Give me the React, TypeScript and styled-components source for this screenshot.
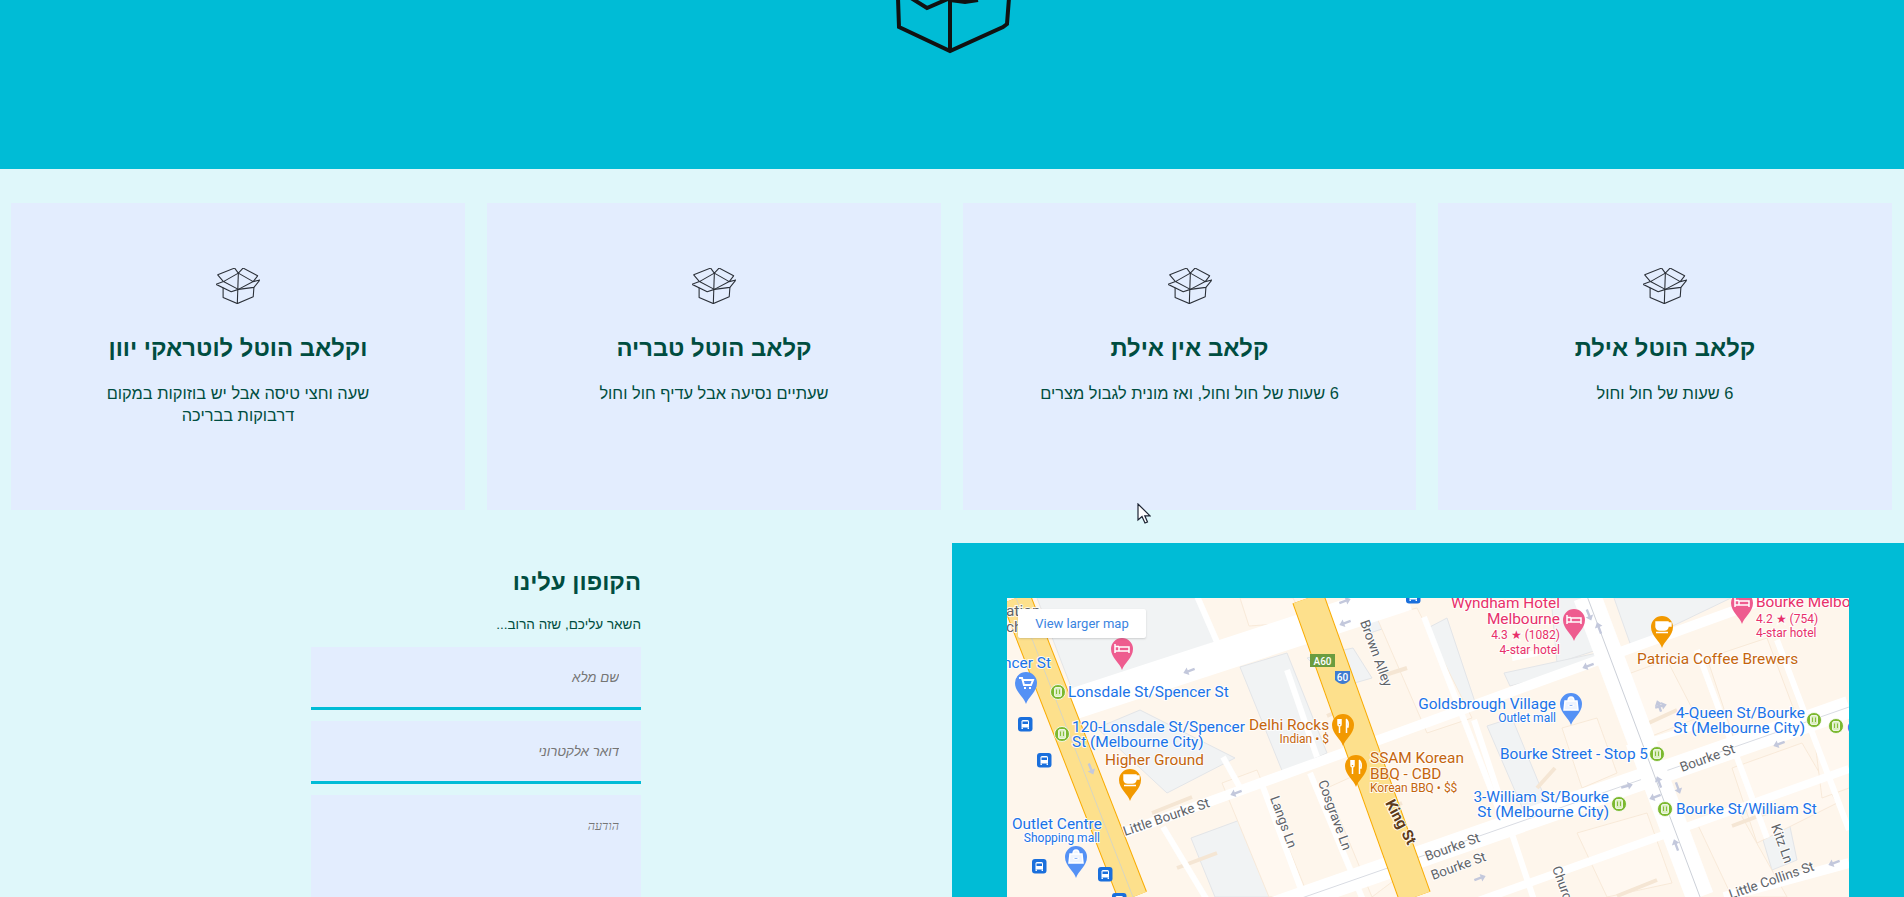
import React from "react"
import styled, { createGlobalStyle } from "styled-components"

const GlobalStyle = createGlobalStyle`
  html, body {
    margin: 0;
    padding: 0;
    background: #dff7fa;
    font-family: "Liberation Sans", Arial, sans-serif;
  }
  * { box-sizing: border-box; }
`

const Page = styled.div`
  position: relative;
  height: 100vh;
  overflow: hidden;
  direction: rtl;
  color: #004d40;
`

const Hero = styled.header`
  height: 169px;
  background: #00bcd6;
  display: flex;
  justify-content: center;
  align-items: flex-start;
`

const Cards = styled.section`
  display: grid;
  grid-template-columns: 454px 453px 454px 454px;
  gap: 22px;
  padding: 34px 12px 0 11px;
`

const Card = styled.article`
  height: 307px;
  background: #e3edfe;
  padding: 65px 70px 0;
  text-align: center;
`

const CardTitle = styled.h3`
  margin: 24px 0 0;
  font-size: 23.8px;
  line-height: 32px;
  font-weight: 700;
`

const CardText = styled.p`
  margin: 19px 0 0;
  font-size: 16.4px;
  line-height: 21.5px;
`

const Contact = styled.section`
  display: grid;
  grid-template-columns: 1fr 1fr;
  margin-top: 33px;
`

const MapPanel = styled.div`
  background: #00bcd6;
  padding: 55px;
`

const MapFrame = styled.div`
  position: relative;
  height: 450px;
  overflow: hidden;
  background: #fef6ec;
`

const MapButton = styled.a`
  position: absolute;
  top: 11px;
  left: 11px;
  width: 128px;
  height: 29px;
  display: flex;
  align-items: center;
  justify-content: center;
  background: #fff;
  border-radius: 2px;
  box-shadow: 0 1px 2px rgba(60, 64, 67, 0.2);
  font: 13px Roboto, Arial, sans-serif;
  color: #3a84df;
  direction: ltr;
`

const FormColumn = styled.form`
  width: 330px;
  margin: 0 auto;
  padding-top: 23px;
`

const FormTitle = styled.h2`
  margin: 0;
  font-size: 23.8px;
  line-height: 32px;
  font-weight: 700;
`

const FormHint = styled.p`
  margin: 18px 0 13px;
  font-size: 13.5px;
  line-height: 18px;
`

const FormInput = styled.input`
  display: block;
  width: 100%;
  height: 63px;
  margin-bottom: 11px;
  padding: 0 22px;
  background: #e3edfe;
  border: 0;
  border-bottom: 3px solid #00bcd6;
  font: italic 13.33px "Liberation Sans", Arial, sans-serif;
`

const FormArea = styled.textarea`
  display: block;
  width: 100%;
  height: 180px;
  padding: 24px 22px;
  background: #e3edfe;
  border: 0;
  resize: none;
  font: italic 12.5px "Liberation Serif", serif;
`

const Cursor = styled.svg`
  position: absolute;
  top: 503px;
  left: 1137px;
`

const MapSvg = styled.svg`
  display: block;
  direction: ltr;
`

const colors: Record<string, string> = {
  blue: "#1a73e8",
  orange: "#c5650d",
  pink: "#e8306a",
  gray: "#5f6368",
  brown: "#5d3a1a",
}

const MapText = styled.text<{ $tone: string; $size: number; $bold?: boolean }>`
  font-family: Roboto, Arial, sans-serif;
  font-size: ${(p) => p.$size}px;
  font-weight: ${(p) => (p.$bold ? 700 : 400)};
  fill: ${(p) => colors[p.$tone]};
  stroke: #fff;
  stroke-width: 2px;
  stroke-opacity: 0.85;
  paint-order: stroke;
`

const BigBox = () => (
  <svg width="120" height="54" viewBox="0 0 120 54" fill="none" stroke="#111" strokeWidth="4">
    <path d="M6 -2 L7 27 L58 51 L111 27 L115 24 L117 -2" />
    <path d="M58 51 L58 -2" />
    <path d="M19 -2 L35 8 L58 -2" />
    <path d="M58 0 L73 2 L86 0" />
  </svg>
)

const SmallBox = () => (
  <svg width="44" height="36" viewBox="0 0 130 106" fill="none" stroke="#2b3038" strokeWidth="3.2" strokeLinejoin="round">
    <path d="M21 58 V87 L63 105 L110 85 L112 57" />
    <path d="M66 15 L63 105" />
    <path d="M66 15 L22 40 L66 63 L110 40 Z" />
    <path d="M22 40 L0 48 L45 70 L66 63 L112 57 L130 35 L110 40" />
    <path d="M22 40 L5 20 L55 0 L66 15 L80 0 L123 23 L110 40" />
  </svg>
)

type PinKind = "bed" | "cart" | "cup" | "fork" | "bag"

const pinFill: Record<PinKind, string> = {
  bed: "#ee5c8f",
  cart: "#5491f5",
  cup: "#f29900",
  fork: "#f29900",
  bag: "#5491f5",
}

const Pin = ({ x, y, kind }: { x: number; y: number; kind: PinKind }) => (
  <g transform={`translate(${x} ${y})`}>
    <path d="M0 32 C-2 25 -11 20 -11 11 A11 11 0 1 1 11 11 C11 20 2 25 0 32Z" fill={pinFill[kind]} />
    {kind === "bed" && <path d="M-7 6 V15 M7 10 V15 M-7 13 H7 M-7 8.5 H-3 M-3 9 H7 V13 H-3Z" stroke="#fff" strokeWidth="1.5" fill="none" />}
    {kind === "cart" && <path d="M-7 6 H-4 L-2 13 H5 L7 8 H-3 M-2 16 H0 M3 16 H5" stroke="#fff" strokeWidth="2" fill="none" />}
    {kind === "cup" && <path d="M-6 6 H6 V11 A4 4 0 0 1 2 14 H-2 A4 4 0 0 1 -6 11 Z M6 7 H9 V10 H6 M-6 16.5 H6" stroke="#fff" strokeWidth="1.4" fill="#fff" />}
    {kind === "fork" && <path d="M-5 5 V10 Q-5 12 -3.5 12 V19 M-3.5 5 V10 M-2 5 V10 Q-2 12 -3.5 12 M3 5 Q6 7 5 13 H3.5 V19 M3.5 5 V13" stroke="#fff" strokeWidth="1.5" fill="none" />}
    {kind === "bag" && <path d="M-6 8 H6 L7 17 H-7 Z M-3 8 Q-3 4 0 4 Q3 4 3 8 M-3 12 Q0 15 3 12" stroke="#fff" strokeWidth="1.5" fill="#fff" fillOpacity="0.9" />}
  </g>
)

const BusStop = ({ x, y }: { x: number; y: number }) => (
  <g transform={`translate(${x} ${y})`}>
    <rect width="14.5" height="14.5" rx="3" fill="#1a6fdc" />
    <path d="M3.5 4.5 Q3.5 3 5 3 H9.5 Q11 3 11 4.5 V10.5 H3.5 Z" fill="#fff" />
    <rect x="4.5" y="4.5" width="5.5" height="2.5" fill="#1a6fdc" />
    <path d="M4.2 10.5 V12 M10.3 10.5 V12" stroke="#fff" strokeWidth="1.4" />
  </g>
)

const TramStop = ({ x, y }: { x: number; y: number }) => (
  <g transform={`translate(${x} ${y})`}>
    <circle r="7.5" fill="#7cb82f" stroke="#fff" strokeWidth="0.8" />
    <rect x="-3.5" y="-4.5" width="7" height="9" rx="1.5" fill="#dbeec0" stroke="#fff" strokeWidth="0.8" />
    <path d="M-1.5 -2.5 V2 M1.5 -2.5 V2" stroke="#7cb82f" strokeWidth="0.9" />
  </g>
)

const Arrow = ({ x, y, angle }: { x: number; y: number; angle: number }) => (
  <path
    transform={`translate(${x} ${y}) rotate(${angle})`}
    d="M-6 -1.2 H1 V-4 L6 0 L1 4 V1.2 H-6 Z"
    fill="#c3c8dc"
  />
)

const grayBlocks = [
  "30,0 190,0 208,44 66,94",
  "233,69 280,55 320,155 276,175",
  "184,240 233,222 288,286 296,299 208,299",
  "340,-1 395,0 408,20 360,36",
  "392,45 440,20 470,110 425,122",
  "90,130 133,112 228,160 160,195",
  "607,0 724,0 624,48",
  "544,0 574,0 590,52 550,65",
  "497,75 590,55 596,64 503,88",
  "748,215 778,205 790,262 765,272",
  "480,128 505,120 540,205 518,216",
  "300,60 346,50 365,80 330,90",
]

const paleBlocks = [
  "233,0 286,0 298,24 242,28",
  "370,20 410,10 465,120 420,135",
  "320,190 375,165 410,265 365,299",
  "215,185 250,172 300,295 262,299",
  "610,80 660,62 690,120 640,140",
  "700,60 760,40 790,120 730,150",
  "555,130 590,120 610,175 575,190",
  "725,170 795,145 830,205 750,245",
  "690,225 730,210 780,299 725,299",
  "570,235 640,215 665,285 600,299",
  "805,120 842,110 842,190 815,200",
]

const tanEdges = [
  "M145 215 L185 199",
  "M320 118 L338 110",
  "M245 190 L262 184",
  "M370 215 L395 205",
  "M375 78 L400 70",
  "M620 135 L670 112",
  "M690 160 L708 153",
  "M725 228 L778 208",
  "M610 298 L650 282",
  "M170 270 L210 255",
  "M530 190 L548 170",
]

const lanes = [
  "M190 -2 L210 44",
  "M280 72 L310 159",
  "M256 189 L298 302",
  "M303 175 L356 302",
  "M156 229 L200 302",
  "M216 159 L236 195",
  "M417 19 L497 225",
  "M467 122 L527 302",
  "M770 42 L842 232",
  "M690 52 L760 240",
  "M505 60 L530 55",
  "M620 150 L690 128",
]

type Label = {
  x: number
  y: number
  t: string
  tone: string
  size?: number
  end?: boolean
  rot?: number
  bold?: boolean
}

const labels: Label[] = [
  { x: -1, y: 18, t: "ation", tone: "gray" },
  { x: -1, y: 34, t: "ch", tone: "gray" },
  { x: 44, y: 70, t: "ncer St", tone: "blue", end: true },
  { x: 61, y: 99, t: "Lonsdale St/Spencer St", tone: "blue" },
  { x: 65, y: 134, t: "120-Lonsdale St/Spencer", tone: "blue" },
  { x: 65, y: 149, t: "St (Melbourne City)", tone: "blue" },
  { x: 98, y: 167, t: "Higher Ground", tone: "orange" },
  { x: 242, y: 132, t: "Delhi Rocks", tone: "orange" },
  { x: 322, y: 145, t: "Indian • $", tone: "orange", size: 12, end: true },
  { x: 363, y: 165, t: "SSAM Korean", tone: "orange" },
  { x: 363, y: 181, t: "BBQ - CBD", tone: "orange" },
  { x: 363, y: 194, t: "Korean BBQ • $$", tone: "orange", size: 12 },
  { x: 5, y: 231, t: "Outlet Centre", tone: "blue" },
  { x: 93, y: 244, t: "Shopping mall", tone: "blue", size: 12, end: true },
  { x: 118, y: 238, t: "Little Bourke St", tone: "gray", size: 13.4, rot: -19 },
  { x: 263, y: 200, t: "Langs Ln", tone: "gray", size: 13.4, rot: 70 },
  { x: 311, y: 184, t: "Cosgrave Ln", tone: "gray", size: 13.4, rot: 70 },
  { x: 353, y: 24, t: "Brown Alley", tone: "gray", size: 13.4, rot: 70 },
  { x: 378, y: 205, t: "King St", tone: "brown", size: 15, rot: 62, bold: true },
  { x: 553, y: 10, t: "Wyndham Hotel", tone: "pink", end: true },
  { x: 553, y: 26, t: "Melbourne", tone: "pink", end: true },
  { x: 553, y: 41, t: "4.3 ★ (1082)", tone: "pink", size: 12, end: true },
  { x: 553, y: 56, t: "4-star hotel", tone: "pink", size: 12, end: true },
  { x: 749, y: 9, t: "Bourke Melbo", tone: "pink" },
  { x: 749, y: 25, t: "4.2 ★ (754)", tone: "pink", size: 12 },
  { x: 749, y: 39, t: "4-star hotel", tone: "pink", size: 12 },
  { x: 630, y: 66, t: "Patricia Coffee Brewers", tone: "orange" },
  { x: 549, y: 111, t: "Goldsbrough Village", tone: "blue", end: true },
  { x: 549, y: 124, t: "Outlet mall", tone: "blue", size: 12, end: true },
  { x: 798, y: 120, t: "4-Queen St/Bourke", tone: "blue", end: true },
  { x: 798, y: 135, t: "St (Melbourne City)", tone: "blue", end: true },
  { x: 641, y: 161, t: "Bourke Street - Stop 5", tone: "blue", end: true },
  { x: 602, y: 204, t: "3-William St/Bourke", tone: "blue", end: true },
  { x: 602, y: 219, t: "St (Melbourne City)", tone: "blue", end: true },
  { x: 669, y: 216, t: "Bourke St/William St", tone: "blue" },
  { x: 840, y: 135, t: "C", tone: "blue" },
  { x: 675, y: 174, t: "Bourke St", tone: "gray", size: 13.4, rot: -20 },
  { x: 420, y: 263, t: "Bourke St", tone: "gray", size: 13.4, rot: -20 },
  { x: 426, y: 282, t: "Bourke St", tone: "gray", size: 13.4, rot: -20 },
  { x: 764, y: 228, t: "Kitz Ln", tone: "gray", size: 13.4, rot: 70 },
  { x: 545, y: 270, t: "Church", tone: "gray", size: 13.4, rot: 70 },
  { x: 808, y: 272, t: "Little Collins St", tone: "gray", size: 13.4, rot: -19, end: true },
]

const MapDrawing = () => (
  <MapSvg width="842" height="450" viewBox="0 0 842 450">
    {grayBlocks.map((p) => (
      <polygon key={p} points={p} fill="#f1f3f4" stroke="#e3e5e8" strokeWidth="1" />
    ))}
    {paleBlocks.map((p) => (
      <polygon key={p} points={p} fill="#fff8f0" stroke="#f6e6d3" strokeWidth="0.8" />
    ))}
    {tanEdges.map((d) => (
      <path key={d} d={d} stroke="#f5e6d4" strokeWidth="4" />
    ))}

    {lanes.map((d) => (
      <path key={d} d={d} stroke="#fff" strokeWidth="6" />
    ))}

    <path d="M60 108 L400 -3" stroke="#fff" strokeWidth="31" />
    <path d="M100 241 L770 -3" stroke="#fff" strokeWidth="10" />
    <path d="M300 364 L842 171" stroke="#fff" strokeWidth="8" />
    <path d="M120 361 L842 109" stroke="#fff" strokeWidth="22" />
    <path d="M120 361 L842 109" stroke="#d9dce3" strokeWidth="1" />
    <path d="M717 299 L842 265" stroke="#fff" strokeWidth="10" />
    <path d="M580 -2 L693 299" stroke="#fff" strokeWidth="28" />
    <path d="M580 -2 L693 299" stroke="#ccd0d8" strokeWidth="1" />

    <path d="M9 0 L126 299" stroke="#f9ab00" strokeWidth="30" />
    <path d="M9 0 L126 299" stroke="#fde08c" strokeWidth="28" />
    <path d="M9 0 L126 299" stroke="#d8d5c0" strokeWidth="1" />
    <path d="M301 0 L408 299" stroke="#f9ab00" strokeWidth="33" />
    <path d="M301 0 L408 299" stroke="#fde08c" strokeWidth="31" />

    <rect x="303" y="56" width="25" height="13" fill="#6b9c3f" />
    <text x="315.5" y="66.5" textAnchor="middle" fontFamily="Roboto, sans-serif" fontSize="10" fontWeight="500" fill="#fff">
      A60
    </text>
    <path d="M328 73 H343 V82 Q336 90 328 82 Z" fill="#3f7bd1" />
    <text x="335.5" y="83" textAnchor="middle" fontFamily="Roboto, sans-serif" fontSize="10" fontWeight="500" fill="#fff">
      60
    </text>

    <Arrow x={338} y={25} angle={160} />
    <Arrow x={182} y={73} angle={160} />
    <Arrow x={338} y={3} angle={-20} />
    <Arrow x={229} y={195} angle={160} />
    <Arrow x={84} y={171} angle={68} />
    <Arrow x={582} y={17} angle={68} />
    <Arrow x={592} y={30} angle={-110} />
    <Arrow x={581} y={68} angle={160} />
    <Arrow x={652} y={108} angle={-110} />
    <Arrow x={652} y={184} angle={-110} />
    <Arrow x={671} y={190} angle={70} />
    <Arrow x={620} y={188} angle={-15} />
    <Arrow x={648} y={199} angle={160} />
    <Arrow x={772} y={146} angle={160} />
    <Arrow x={669} y={247} angle={-110} />
    <Arrow x={827} y={265} angle={160} />
    <Arrow x={473} y={280} angle={-20} />
    <Arrow x={654} y={108} angle={-15} />

    <BusStop x={11} y={119} />
    <BusStop x={30} y={155} />
    <BusStop x={25} y={261} />
    <BusStop x={91} y={269} />
    <BusStop x={399} y={-9} />
    <BusStop x={105} y={295} />

    <TramStop x={51} y={94} />
    <TramStop x={55} y={136} />
    <TramStop x={807} y={122} />
    <TramStop x={829} y={128} />
    <TramStop x={650} y={156} />
    <TramStop x={612} y={206} />
    <TramStop x={658} y={211} />

    <Pin x={115} y={40} kind="bed" />
    <Pin x={19} y={74} kind="cart" />
    <Pin x={123} y={171} kind="cup" />
    <Pin x={336} y={116} kind="fork" />
    <Pin x={349} y={157} kind="fork" />
    <Pin x={69} y={248} kind="bag" />
    <Pin x={567} y={11} kind="bed" />
    <Pin x={735} y={-6} kind="bed" />
    <Pin x={655} y={18} kind="cup" />
    <Pin x={564} y={95} kind="bag" />

    {labels.map((l) => (
      <MapText
        key={`${l.t}-${l.x}-${l.y}`}
        x={l.x}
        y={l.y}
        $tone={l.tone}
        $size={l.size ?? 15.4}
        $bold={l.bold}
        textAnchor={l.end ? "end" : "start"}
        transform={l.rot ? `rotate(${l.rot} ${l.x} ${l.y})` : undefined}
      >
        {l.t}
      </MapText>
    ))}
  </MapSvg>
)

const hotels = [
  { title: "קלאב הוטל אילת", text: "6 שעות של חול וחול" },
  { title: "קלאב אין אילת", text: "6 שעות של חול וחול, ואז מונית לגבול מצרים" },
  { title: "קלאב הוטל טבריה", text: "שעתיים נסיעה אבל עדיף חול וחול" },
  { title: "וקלאב הוטל לוטראקי יוון", text: "שעה וחצי טיסה אבל יש בוזוקות במקום דרבוקות בבריכה" },
]

const App = () => (
  <Page>
    <GlobalStyle />
    <Hero>
      <BigBox />
    </Hero>
    <Cards>
      {hotels.map((h) => (
        <Card key={h.title}>
          <SmallBox />
          <CardTitle>{h.title}</CardTitle>
          <CardText>{h.text}</CardText>
        </Card>
      ))}
    </Cards>
    <Contact>
      <MapPanel>
        <MapFrame>
          <MapDrawing />
          <MapButton>View larger map</MapButton>
        </MapFrame>
      </MapPanel>
      <FormColumn>
        <FormTitle>הקופון עלינו</FormTitle>
        <FormHint>השאר עליכם, שזה הרוב...</FormHint>
        <FormInput placeholder="שם מלא" />
        <FormInput placeholder="דואר אלקטרוני" />
        <FormArea placeholder="הודעה" />
      </FormColumn>
    </Contact>
    <Cursor width="14" height="21" viewBox="0 0 14 21">
      <path d="M1 1 V17 L5 13.5 L8 20 L10.5 19 L7.8 12.8 L13 12.8 Z" fill="#fff" stroke="#1d2433" strokeWidth="1.2" />
    </Cursor>
  </Page>
)

export default App
